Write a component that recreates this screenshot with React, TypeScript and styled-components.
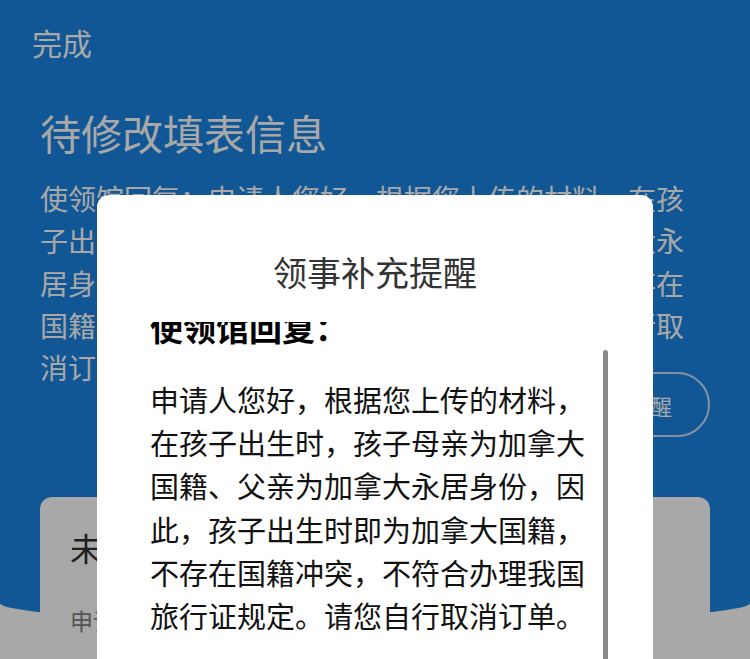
import React, { useLayoutEffect, useRef } from 'react';
import styled, { createGlobalStyle } from 'styled-components';

const GlobalStyle = createGlobalStyle`
  html, body {
    margin: 0;
    padding: 0;
    height: 100%;
    overflow: hidden;
  }
  body {
    font-family: "Noto Sans CJK SC", "Noto Sans", sans-serif;
    background: #ffffff;
  }
`;

const replyText =
  '申请人您好，根据您上传的材料，在孩子出生时，孩子母亲为加拿大国籍、父亲为加拿大永居身份，因此，孩子出生时即为加拿大国籍，不存在国籍冲突，不符合办理我国旅行证规定。请您自行取消订单。';

function App() {
  const scrollRef = useRef<HTMLDivElement>(null);

  useLayoutEffect(() => {
    if (scrollRef.current) scrollRef.current.scrollTop = 17;
  }, []);

  return (
    <Screen>
      <GlobalStyle />
      <Header>
        <NavRow>
          <DoneLink>完成</DoneLink>
        </NavRow>
        <PageTitle>待修改填表信息</PageTitle>
        <Notice>使领馆回复：{replyText}</Notice>
        <ActionRow>
          <OutlineButton>查看领事补充提醒</OutlineButton>
        </ActionRow>
      </Header>

      <Card>
        <CardTitle>未通过审核</CardTitle>
        <CardMeta>申请编号：2023101800001</CardMeta>
      </Card>

      <Mask />

      <Modal>
        <ModalTitle>领事补充提醒</ModalTitle>
        <ScrollArea ref={scrollRef}>
          <ReplyHeading>使领馆回复：</ReplyHeading>
          <ReplyBody>{replyText}</ReplyBody>
        </ScrollArea>
        <ScrollThumb />
      </Modal>
    </Screen>
  );
}

export default App;

const Screen = styled.div`
  position: relative;
  height: 100vh;
  overflow: hidden;
  background: #ffffff;
`;

const Header = styled.header`
  background: #1b84e2;
  padding: 21px 40px 186px;
  display: flex;
  flex-direction: column;
  border-radius: 0 0 50% 50% / 0 0 20px 20px;
`;

const NavRow = styled.div`
  display: flex;
  margin-left: -8px;
`;

const DoneLink = styled.span`
  font-size: 30px;
  line-height: 42px;
  color: #ffffff;
`;

const PageTitle = styled.h1`
  margin: 41px 0 0;
  font-size: 41px;
  line-height: 56px;
  font-weight: 400;
  color: #ffffff;
`;

const Notice = styled.p`
  margin: 17px 0 0;
  font-size: 28px;
  line-height: 42.25px;
  color: #ffffff;
`;

const ActionRow = styled.div`
  display: flex;
  justify-content: flex-end;
  margin-top: -16px;
`;

const OutlineButton = styled.button`
  height: 65px;
  padding: 0 36px 0 40px;
  border: 2px solid rgba(255, 255, 255, 0.75);
  border-radius: 33px;
  background: transparent;
  color: #ffffff;
  font-family: "Noto Sans CJK SC", sans-serif;
  font-size: 22px;
`;

const Card = styled.section`
  position: relative;
  margin: -126px 40px 0;
  padding: 28px 30px;
  background: #ffffff;
  border-radius: 12px 12px 0 0;
  min-height: 300px;
`;

const CardTitle = styled.h2`
  margin: 0;
  font-size: 32px;
  line-height: 44px;
  font-weight: 400;
  color: #2f2f2f;
`;

const CardMeta = styled.div`
  margin-top: 35px;
  font-size: 23px;
  line-height: 32px;
  color: #818181;
`;

const Mask = styled.div`
  position: absolute;
  inset: 0;
  background: rgba(0, 0, 0, 0.34);
`;

const Modal = styled.div`
  position: absolute;
  left: 97px;
  top: 195px;
  width: 556px;
  height: 600px;
  background: #ffffff;
  border-radius: 12px;
  display: flex;
  flex-direction: column;
`;

const ModalTitle = styled.h3`
  margin: 54px 0 0;
  text-align: center;
  font-size: 34px;
  line-height: 46px;
  font-weight: 400;
  color: #333333;
`;

const ScrollArea = styled.div`
  margin-top: 27px;
  padding: 0 53px;
  height: 420px;
  overflow-y: auto;
  scrollbar-width: none;
  &::-webkit-scrollbar {
    display: none;
  }
`;

const ReplyHeading = styled.div`
  font-size: 33px;
  line-height: 44px;
  font-weight: 700;
  color: #000000;
`;

const ReplyBody = styled.p`
  margin: 29px 0 0;
  width: 440px;
  font-size: 29px;
  line-height: 43.2px;
  color: #111111;
  padding-bottom: 200px;
`;

const ScrollThumb = styled.div`
  position: absolute;
  left: 506px;
  top: 155px;
  width: 5px;
  height: 420px;
  border-radius: 3px;
  background: #888888;
`;
